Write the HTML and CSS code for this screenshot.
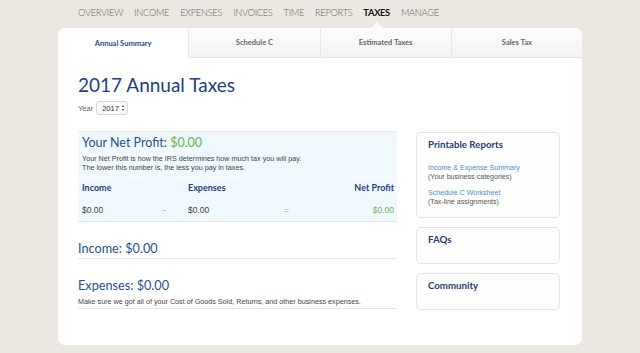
FILE: index.html
```html
<!DOCTYPE html>
<html lang="en">
<head>
  <meta charset="UTF-8">
  <title>2017 Annual Taxes</title>
  <link rel="stylesheet" href="styles.css">
</head>
<body>
  <div class="page">
    <!-- Top navigation -->
    <ul class="main-nav">
      <li>Overview</li>
      <li>Income</li>
      <li>Expenses</li>
      <li>Invoices</li>
      <li>Time</li>
      <li>Reports</li>
      <li class="active">Taxes</li>
      <li>Manage</li>
    </ul>

    <div class="card">
      <div class="tabs">
        <div class="tab active">Annual Summary</div>
        <div class="tab">Schedule C</div>
        <div class="tab">Estimated Taxes</div>
        <div class="tab">Sales Tax</div>
      </div>

      <div class="content">
        <h1 class="page-title">2017 Annual Taxes</h1>
        <div class="year-row">
          <span>Year</span>
          <span class="year-select">2017 <span class="arrows">&#9652;<br>&#9662;</span></span>
        </div>

        <div class="columns">
          <div class="main-col">
            <div class="profit-box">
              <h2 class="profit-title">Your Net Profit: <span class="green">$0.00</span></h2>
              <p class="profit-desc">Your Net Profit is how the IRS determines how much tax you will pay.<br>The lower this number is, the less you pay in taxes.</p>
              <div class="profit-row head">
                <span class="c-income">Income</span>
                <span class="c-op"></span>
                <span class="c-exp">Expenses</span>
                <span class="c-op2"></span>
                <span class="c-net">Net Profit</span>
              </div>
              <div class="profit-row values">
                <span class="c-income">$0.00</span>
                <span class="c-op">-</span>
                <span class="c-exp">$0.00</span>
                <span class="c-op2">=</span>
                <span class="c-net green">$0.00</span>
              </div>
            </div>

            <div class="section">
              <h3>Income: $0.00</h3>
            </div>
            <div class="section">
              <h3>Expenses: $0.00</h3>
              <p>Make sure we got all of your Cost of Goods Sold, Returns, and other business expenses.</p>
            </div>
          </div>

          <div class="side-col">
            <div class="panel reports">
              <h4>Printable Reports</h4>
              <a href="#">Income &amp; Expense Summary</a>
              <span class="sub">(Your business categories)</span>
              <a href="#">Schedule C Worksheet</a>
              <span class="sub">(Tax-line assignments)</span>
            </div>
            <div class="panel small">
              <h4>FAQs</h4>
            </div>
            <div class="panel small">
              <h4>Community</h4>
            </div>
          </div>
        </div>
      </div>
    </div>
  </div>
</body>
</html>
```

FILE: styles.css
```css
/* Page background and container */
body {
  margin: 0;
  background-color: #eae8e1;
  font-family: "Liberation Sans", Arial, sans-serif;
}

.page {
  width: 524px;
  margin: 0 auto;
}

/* Top navigation */
.main-nav {
  list-style: none;
  margin: 0;
  padding: 7px 0 0 20px;
  height: 21px;
  display: flex;
  gap: 11px;
  font-family: Lato, sans-serif;
  font-size: 9.3px;
  font-weight: 300;
  letter-spacing: -0.3px;
  text-transform: uppercase;
  color: #666;
}

.main-nav li {
  position: relative;
  line-height: 11px;
}

.main-nav li.active {
  color: #111;
  font-weight: bold;
}

/* little white caret under the active item */
.main-nav li.active::after {
  content: "";
  position: absolute;
  left: 50%;
  top: 15px;
  margin-left: -6px;
  border-left: 6px solid transparent;
  border-right: 6px solid transparent;
  border-bottom: 6px solid #fbfbfb;
}

/* White card */
.card {
  background-color: #fff;
  border-radius: 7px;
  height: 317px;
  overflow: hidden;
}

.tabs {
  display: flex;
  height: 30px;
}

.tab {
  flex: 1;
  display: flex;
  align-items: center;
  justify-content: center;
  font-family: Lato, sans-serif;
  font-size: 7.5px;
  font-weight: bold;
  color: #666;
  background: linear-gradient(#fdfdfd, #f3f3f3);
  border-left: 1px solid #e8e8e8;
  border-bottom: 1px solid #e6e6e6;
}

.tab.active {
  background: #fff;
  color: #2a4a7d;
  border: none;
}

/* Main content */
.content {
  padding: 0 22px 0 20px;
}

.page-title {
  margin: 16px 0 0;
  font-family: Lato, sans-serif;
  font-weight: normal;
  font-size: 19px;
  line-height: 22px;
  color: #1c3f80;
}

.year-row {
  display: flex;
  align-items: center;
  gap: 3px;
  margin-top: 5px;
  font-size: 7.5px;
  color: #666;
}

.year-select {
  display: inline-flex;
  align-items: center;
  gap: 3px;
  height: 12px;
  padding: 0 3px 0 5px;
  border: 1px solid #d8d8d8;
  border-radius: 3px;
  background: #fafafa;
  color: #333;
  font-size: 7.5px;
}

.arrows {
  font-size: 4px;
  line-height: 4px;
  color: #333;
}

.columns {
  display: flex;
  gap: 19px;
  margin-top: 16px;
}

.main-col {
  width: 319px;
}

.side-col {
  width: 144px;
  display: flex;
  flex-direction: column;
  gap: 9px;
  padding-top: 1px;
}

/* Net profit box */
.profit-box {
  background-color: #eff9fd;
  border-top: 1px solid #e4eef2;
  border-bottom: 1px solid #dfe6ea;
}

.profit-title {
  margin: 0;
  padding: 3px 4px 0;
  font-family: Lato, sans-serif;
  font-weight: normal;
  font-size: 12.5px;
  line-height: 15px;
  color: #2b4f8b;
}

.green {
  color: #6ab24e;
}

.profit-desc {
  margin: 4px 0 0;
  padding: 0 4px;
  font-size: 7.2px;
  line-height: 9px;
  color: #444;
}

.profit-row {
  display: flex;
  align-items: center;
  padding: 0 3px 0 4px;
  border-top: 1px solid #f8fcfe;
}

.profit-row.head {
  margin-top: 4px;
  height: 21px;
  font-family: Lato, sans-serif;
  font-weight: bold;
  font-size: 9px;
  color: #1f3e74;
}

.profit-row.values {
  height: 22px;
  font-size: 8.5px;
  color: #444;
}

.c-income { width: 81px; }
.c-op { width: 25px; color: #888; }
.c-exp { width: 96px; }
.c-op2 { width: 20px; color: #aaa; }
.c-net { flex: 1; text-align: right; }

/* Income / Expenses sections */
.section {
  margin-top: 18px;
  border-bottom: 1px solid #e4e4e4;
  padding-bottom: 2px;
}

.section h3 {
  margin: 0;
  font-family: Lato, sans-serif;
  font-weight: normal;
  font-size: 12.7px;
  line-height: 16px;
  color: #2b4f8b;
}

.section p {
  margin: 4px 0 0;
  font-size: 7.2px;
  line-height: 9px;
  color: #444;
}

/* Right side panels */
.panel {
  border: 1px solid #e4e4e4;
  border-radius: 5px;
  background-color: #fdfdfd;
  padding: 5px 11px 0;
}

.panel h4 {
  margin: 0;
  font-family: Lato, sans-serif;
  font-weight: bold;
  font-size: 9.7px;
  line-height: 12px;
  color: #1f3e74;
}

.panel.reports {
  height: 79px;
}

.panel.small {
  height: 30px;
}

.panel a {
  display: block;
  margin-top: 14px;
  font-size: 7.1px;
  line-height: 9px;
  color: #4a8fd2;
  text-decoration: none;
}

.panel a + .sub + a {
  margin-top: 7px;
}

.panel .sub {
  display: block;
  font-size: 7.1px;
  line-height: 9px;
  color: #555;
}
```
